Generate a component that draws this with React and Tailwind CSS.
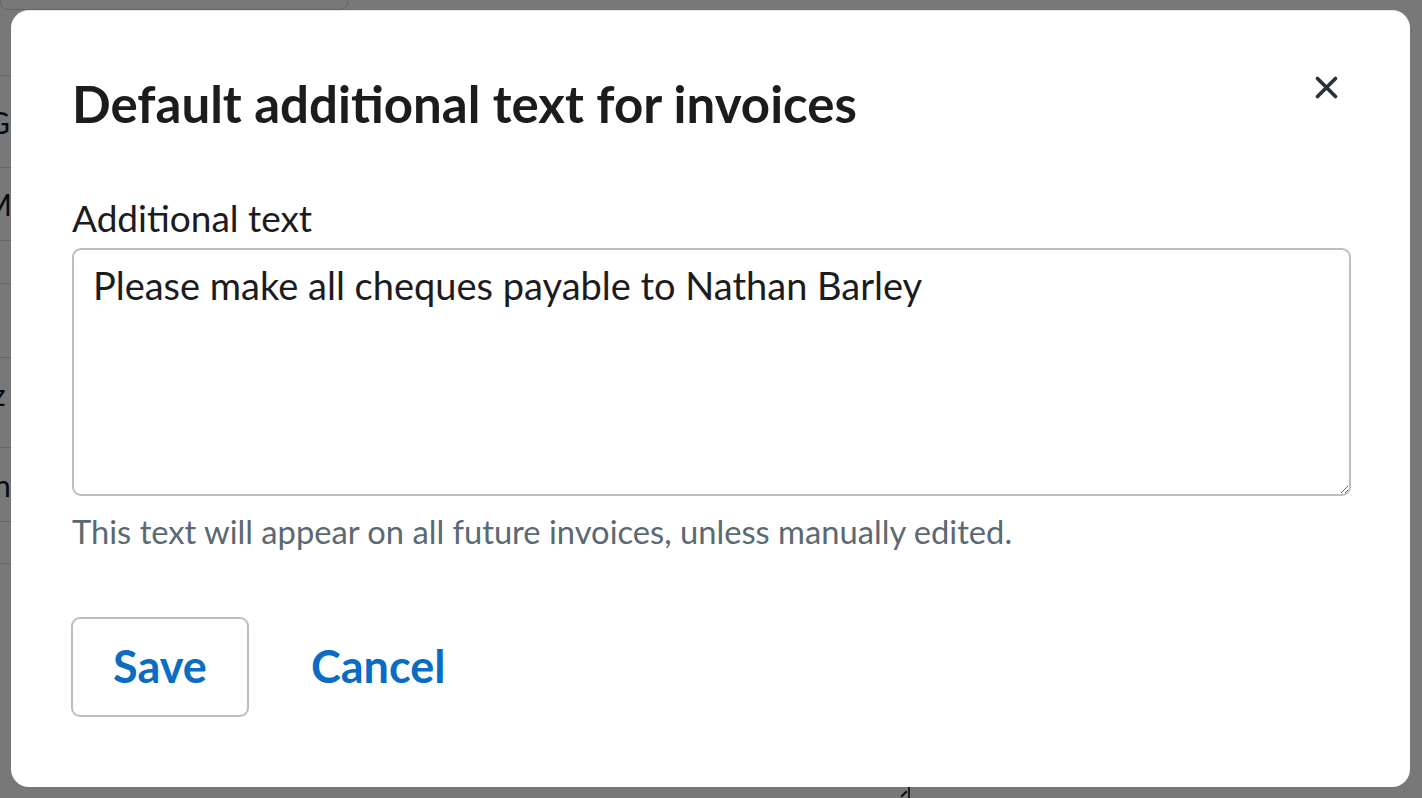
import React, { useState } from "react";

const font = { fontFamily: "Lato, 'Noto Sans', sans-serif" };

const BackgroundPage = () => (
  <div className="absolute inset-0 bg-white overflow-hidden" aria-hidden="true">
    <div className="w-[348px] h-[40px] -mt-[30px] border border-gray-300 rounded-lg" />
    <div className="w-[200px] mt-[65px] text-[30px] text-gray-900 leading-none">
      <div className="h-[92px] border-t border-gray-300 flex items-center -ml-[12px]">G</div>
      <div className="h-[73px] border-t border-gray-300 flex items-center -ml-[16px]">M</div>
      <div className="h-[43px] border-t border-gray-300" />
      <div className="h-[74px] border-t border-gray-300" />
      <div className="h-[90px] border-t border-gray-300 flex items-center -ml-[8px] pb-[18px]">z</div>
      <div className="h-[74px] border-t border-gray-300 flex items-center -ml-[6px]">n</div>
      <div className="h-[42px] border-t border-gray-300" />
      <div className="h-[40px] border-t border-gray-300" />
    </div>
    <div className="absolute left-[908px] top-[780px] h-[30px] border-l-2 border-gray-700" />
    <div className="absolute left-[900px] top-[793px] w-[8px] border-t-2 border-gray-900 -rotate-45" />
  </div>
);

const CloseIcon = () => (
  <svg width="27" height="27" viewBox="0 0 24 24" fill="none" stroke="#27323b" strokeWidth="3.3" strokeLinecap="round">
    <path d="M4 4 L20 20 M20 4 L4 20" />
  </svg>
);

export default function App() {
  const [text, setText] = useState("Please make all cheques payable to Nathan Barley");

  return (
    <div className="relative w-[1422px] h-[798px] overflow-hidden" style={font}>
      <BackgroundPage />
      <div className="absolute inset-0 bg-black/[0.53]" />

      {/* Modal */}
      <div className="absolute left-[11px] top-[10px] w-[1399px] h-[777px] bg-white rounded-[18px] border-t border-gray-200">
        <div className="flex justify-between items-start pl-[61px] pr-[70px] pt-[63px]">
          <h1 className="text-[51px] font-bold leading-[60px] text-[#1c1c1e]">
            Default additional text for invoices
          </h1>
          <button className="mt-[0px]">
            <CloseIcon />
          </button>
        </div>

        <div className="pl-[61px] pr-[59px] mt-[62px]">
          <label className="block text-[37px] leading-[44px] text-[#1c1c1e]">Additional text</label>
          <textarea
            value={text}
            onChange={(e) => setText(e.target.value)}
            className="block w-full h-[248px] mt-[8px] border-2 border-[#b9bfc5] rounded-[9px] px-[19px] pt-[12px] text-[38px] leading-[46px] text-[#1c1c1e] outline-none resize-y"
            style={font}
          />
          <p className="mt-[16px] text-[32.7px] leading-[40px] text-[#5b6973]">
            This text will appear on all future invoices, unless manually edited.
          </p>

          <div className="flex items-center gap-[62px] mt-[65px] -ml-[1px]">
            <button className="w-[178px] h-[100px] border-2 border-[#b9bfc5] rounded-[9px] text-[45px] font-bold text-[#0a6cc2]">
              Save
            </button>
            <button className="text-[45px] font-bold text-[#0a6cc2]">Cancel</button>
          </div>
        </div>
      </div>
    </div>
  );
}
